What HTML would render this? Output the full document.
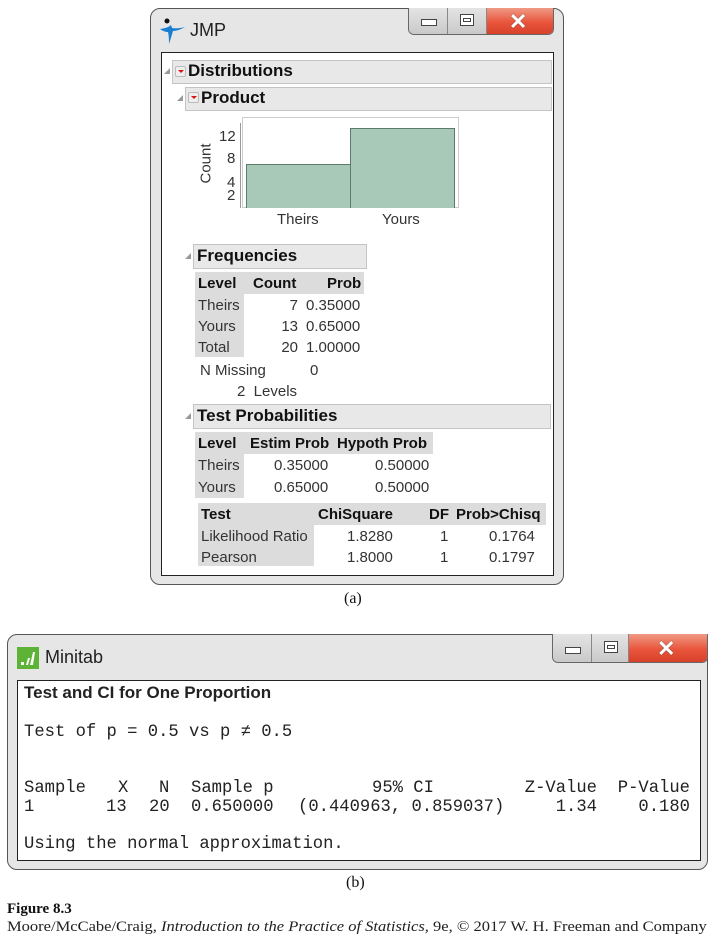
<!DOCTYPE html>
<html><head><meta charset="utf-8"><style>
*{margin:0;padding:0;box-sizing:border-box}
body{width:714px;height:946px;background:#fff;position:relative;overflow:hidden;font-family:"Liberation Sans",sans-serif;color:#111}
.a{position:absolute;white-space:nowrap}
.win{position:absolute;background:#e6e6e6;border:1.5px solid #555;border-radius:10px}
.panel{position:absolute;background:#fff;border:1.5px solid #222}
.bar{position:absolute;background:#e8e8e8;border:1px solid #c4c4c4}
.g{position:absolute;background:#dcdcdc}
.b{font-weight:bold}
.s{font-size:15px;color:#333}
.tri{position:absolute;width:0;height:0;border-left:6px solid transparent;border-bottom:6px solid #999}
.red{position:absolute;width:11px;height:11px;background:#eee;border:1px solid #bbb;border-radius:2px}
.red:after{content:"";position:absolute;left:2px;top:3px;border-left:3px solid transparent;border-right:3px solid transparent;border-top:3px solid #d11}
.btns{position:absolute;display:flex;border:1.5px solid #666;border-top:none;border-radius:0 0 6px 6px;overflow:hidden}
.btns div{height:100%;border-right:1px solid #888;background:linear-gradient(#e4e4e4,#c9c9c9);position:relative}
.btns .x{background:linear-gradient(#f09a85,#e8553c 55%,#d8402a);border:none}
.mono{font-family:"Liberation Mono",monospace;font-size:17.2px;color:#222}
.r{text-align:right}
</style></head><body>

<!-- JMP window -->
<div class="win" style="left:150px;top:8px;width:414px;height:577px"></div>
<div class="btns" style="left:408px;top:8px;width:146px;height:27px">
 <div style="width:40px"><span style="position:absolute;left:12px;top:11px;width:16px;height:7px;border:1.5px solid #444;background:#fff"></span></div>
 <div style="width:39px"><span style="position:absolute;left:12px;top:6px;width:14px;height:12px;border:1.5px solid #444;background:#fff"></span><span style="position:absolute;left:15px;top:10px;width:8px;height:4px;border:1px solid #444"></span></div>
 <div class="x" style="width:67px"><span class="a" style="left:22px;top:1px;color:#fff;font-weight:bold;font-size:22px;text-shadow:0 0 1px #333">✕</span></div>
</div>
<svg class="a" style="left:160px;top:16px" width="26" height="30" viewBox="0 0 26 30"><circle cx="7" cy="5" r="2.5" fill="#111"/><path d="M0 13 Q8 12 11 9 L12 12 Q18 13 25 11 Q18 15 13 15 Q11 22 9 28 Q9 20 8 16 Q4 16 0 13Z" fill="#1a7fd0"/></svg>
<div class="a" style="left:190px;top:20px;font-size:18px;color:#222">JMP</div>
<div class="panel" style="left:161px;top:52px;width:393px;height:524px"></div>

<div class="tri" style="left:164px;top:68px"></div>
<div class="bar" style="left:172px;top:60px;width:380px;height:24px"></div>
<div class="red" style="left:175px;top:66px"></div>
<div class="a b" style="left:188px;top:61px;font-size:17px">Distributions</div>
<div class="tri" style="left:177px;top:95px"></div>
<div class="bar" style="left:185px;top:87px;width:367px;height:24px"></div>
<div class="red" style="left:188px;top:92px"></div>
<div class="a b" style="left:201px;top:88px;font-size:17px">Product</div>

<!-- chart -->
<div class="a" style="left:242px;top:117px;width:217px;height:91px;border:1px solid #ccc;background:#fff"></div>
<div class="a" style="left:246px;top:164px;width:105px;height:44px;background:#a8c8b8;border:1px solid #5d7a6c;border-bottom:none"></div>
<div class="a" style="left:350px;top:128px;width:105px;height:80px;background:#a8c8b8;border:1px solid #5d7a6c;border-bottom:none"></div>
<div class="a" style="left:236px;top:123px;width:5px;height:85px;border-right:1px solid #999"></div>
<div class="a s" style="left:219px;top:128px">12</div>
<div class="a s" style="left:227px;top:150px">8</div>
<div class="a s" style="left:227px;top:174px">4</div>
<div class="a s" style="left:227px;top:187px">2</div>
<div class="a s" style="left:186px;top:155px;transform:rotate(-90deg);transform-origin:center">Count</div>
<div class="a s" style="left:277px;top:211px">Theirs</div>
<div class="a s" style="left:382px;top:211px">Yours</div>

<!-- Frequencies -->
<div class="tri" style="left:185px;top:253px"></div>
<div class="bar" style="left:193px;top:244px;width:174px;height:25px"></div>
<div class="a b" style="left:197px;top:246px;font-size:17px">Frequencies</div>
<div class="g" style="left:195px;top:272px;width:169px;height:22px"></div>
<div class="g" style="left:195px;top:294px;width:49px;height:63px"></div>
<div class="a b s" style="left:198px;top:275px;color:#111">Level</div>
<div class="a b s" style="left:253px;top:275px;color:#111">Count</div>
<div class="a b s" style="left:327px;top:275px;color:#111">Prob</div>
<div class="a s" style="left:198px;top:297px">Theirs</div>
<div class="a s" style="left:198px;top:318px">Yours</div>
<div class="a s" style="left:198px;top:339px">Total</div>
<div class="a s r" style="left:260px;top:297px;width:38px">7</div>
<div class="a s r" style="left:260px;top:318px;width:38px">13</div>
<div class="a s r" style="left:260px;top:339px;width:38px">20</div>
<div class="a s" style="left:306px;top:297px">0.35000</div>
<div class="a s" style="left:306px;top:318px">0.65000</div>
<div class="a s" style="left:306px;top:339px">1.00000</div>
<div class="a s" style="left:200px;top:362px">N Missing</div>
<div class="a s" style="left:310px;top:362px">0</div>
<div class="a s" style="left:237px;top:383px">2 &nbsp;Levels</div>

<!-- Test Probabilities -->
<div class="tri" style="left:185px;top:413px"></div>
<div class="bar" style="left:193px;top:404px;width:358px;height:25px"></div>
<div class="a b" style="left:197px;top:406px;font-size:17px">Test Probabilities</div>
<div class="g" style="left:195px;top:432px;width:238px;height:22px"></div>
<div class="g" style="left:195px;top:454px;width:49px;height:44px"></div>
<div class="a b s" style="left:198px;top:435px;color:#111">Level</div>
<div class="a b s" style="left:250px;top:435px;color:#111">Estim Prob</div>
<div class="a b s" style="left:337px;top:435px;color:#111">Hypoth Prob</div>
<div class="a s" style="left:198px;top:457px">Theirs</div>
<div class="a s" style="left:198px;top:479px">Yours</div>
<div class="a s" style="left:274px;top:457px">0.35000</div>
<div class="a s" style="left:274px;top:479px">0.65000</div>
<div class="a s" style="left:375px;top:457px">0.50000</div>
<div class="a s" style="left:375px;top:479px">0.50000</div>

<div class="g" style="left:198px;top:503px;width:348px;height:22px"></div>
<div class="g" style="left:198px;top:525px;width:116px;height:41px"></div>
<div class="a b s" style="left:201px;top:506px;color:#111">Test</div>
<div class="a b s" style="left:318px;top:506px;color:#111">ChiSquare</div>
<div class="a b s" style="left:429px;top:506px;color:#111">DF</div>
<div class="a b s" style="left:456px;top:506px;color:#111">Prob&gt;Chisq</div>
<div class="a s" style="left:201px;top:528px">Likelihood Ratio</div>
<div class="a s" style="left:201px;top:549px">Pearson</div>
<div class="a s" style="left:347px;top:528px">1.8280</div>
<div class="a s" style="left:347px;top:549px">1.8000</div>
<div class="a s" style="left:440px;top:528px">1</div>
<div class="a s" style="left:440px;top:549px">1</div>
<div class="a s" style="left:489px;top:528px">0.1764</div>
<div class="a s" style="left:489px;top:549px">0.1797</div>

<div class="a" style="left:344px;top:590px;font-family:'Liberation Serif',serif;font-size:16px">(a)</div>

<!-- Minitab window -->
<div class="win" style="left:7px;top:634px;width:701px;height:236px"></div>
<div class="btns" style="left:552px;top:634px;width:156px;height:29px">
 <div style="width:39px"><span style="position:absolute;left:12px;top:13px;width:16px;height:7px;border:1.5px solid #444;background:#fff"></span></div>
 <div style="width:38px"><span style="position:absolute;left:12px;top:7px;width:14px;height:12px;border:1.5px solid #444;background:#fff"></span><span style="position:absolute;left:15px;top:11px;width:8px;height:4px;border:1px solid #444"></span></div>
 <div class="x" style="width:79px"><span class="a" style="left:28px;top:2px;color:#fff;font-weight:bold;font-size:22px;text-shadow:0 0 1px #333">✕</span></div>
</div>
<svg class="a" style="left:17px;top:647px" width="22" height="22"><rect width="22" height="22" fill="#5cb335"/><rect x="4" y="15" width="3" height="3" fill="#fff"/><path d="M9 18 L11 11 L13 11 L11 18Z M13 18 L16 5 L18 5 L16 18Z" fill="#fff"/></svg>
<div class="a" style="left:45px;top:647px;font-size:18px;color:#222">Minitab</div>
<div class="panel" style="left:17px;top:680px;width:684px;height:181px"></div>
<div class="a b" style="left:24px;top:683px;font-size:17px;color:#222">Test and CI for One Proportion</div>
<div class="a mono" style="left:24px;top:723px">Test of p = 0.5 vs p &#8800; 0.5</div>
<div class="a mono" style="left:24px;top:779px">Sample</div>
<div class="a mono" style="left:118px;top:779px">X</div>
<div class="a mono" style="left:159px;top:779px">N</div>
<div class="a mono" style="left:191px;top:779px">Sample p</div>
<div class="a mono" style="left:372px;top:779px">95% CI</div>
<div class="a mono r" style="left:497px;top:779px;width:100px">Z-Value</div>
<div class="a mono r" style="left:590px;top:779px;width:100px">P-Value</div>
<div class="a mono" style="left:24px;top:798px">1</div>
<div class="a mono" style="left:106px;top:798px">13</div>
<div class="a mono" style="left:149px;top:798px">20</div>
<div class="a mono" style="left:191px;top:798px">0.650000</div>
<div class="a mono" style="left:298px;top:798px">(0.440963, 0.859037)</div>
<div class="a mono r" style="left:497px;top:798px;width:100px">1.34</div>
<div class="a mono r" style="left:590px;top:798px;width:100px">0.180</div>
<div class="a mono" style="left:24px;top:835px">Using the normal approximation.</div>

<div class="a" style="left:346px;top:874px;font-family:'Liberation Serif',serif;font-size:16px">(b)</div>
<div class="a b" style="left:7px;top:901px;font-family:'Liberation Serif',serif;font-size:15px">Figure 8.3</div>
<div class="a" style="left:7px;top:919px;font-family:'Liberation Serif',serif;font-size:15px;color:#222;transform:scaleX(1.1);transform-origin:left">Moore/McCabe/Craig, <i>Introduction to the Practice of Statistics</i>, 9e, © 2017 W. H. Freeman and Company</div>
</body></html>
